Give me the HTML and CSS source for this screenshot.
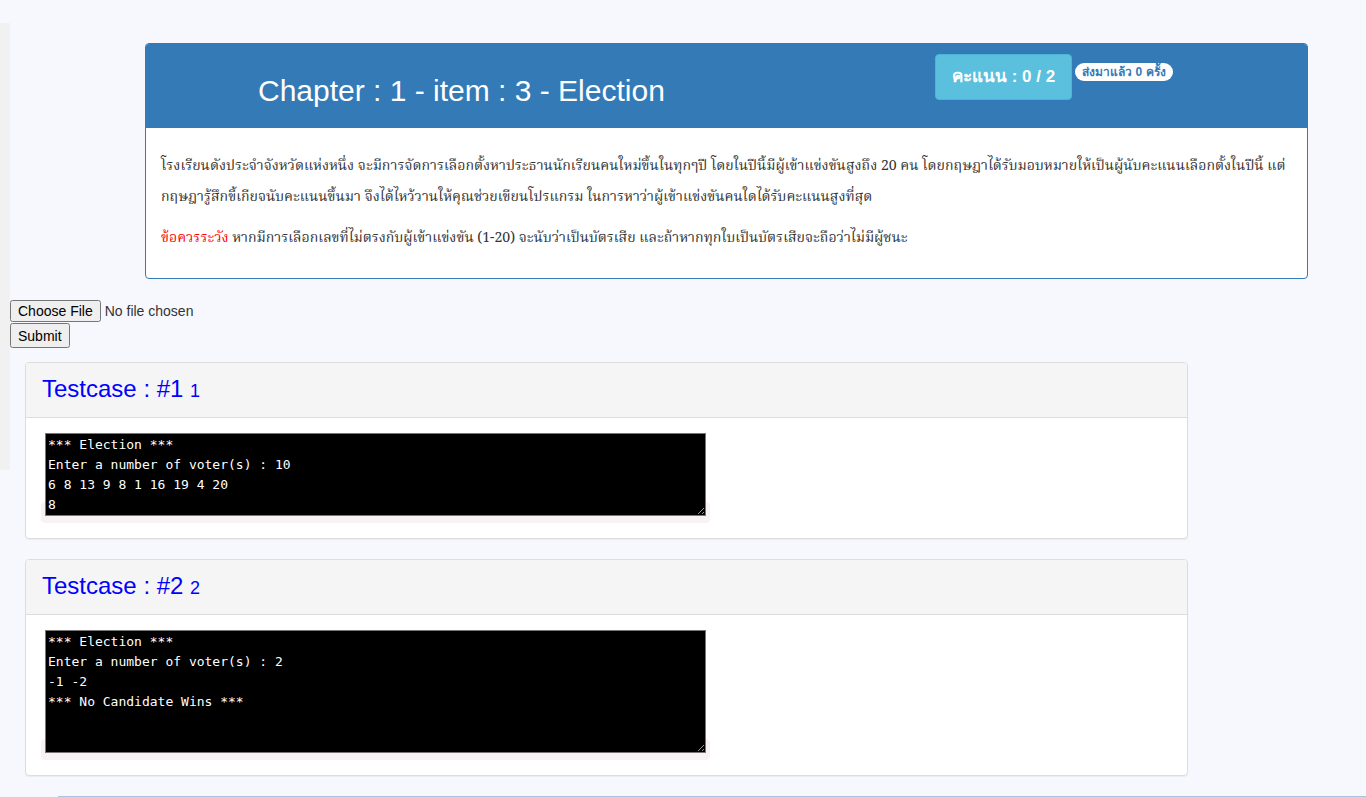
FILE: index.html
```html
<!DOCTYPE html>
<html lang="th">
<head>
<meta charset="utf-8">
<title>Chapter : 1 - item : 3 - Election</title>
<link rel="stylesheet" href="styles.css">
</head>
<body>
<div class="sidebar"></div>
<div class="problem">
  <div class="problem-head">
    <h1 class="problem-title">Chapter : 1 - item : 3 - Election</h1>
    <div class="scores">
      <span class="score">คะแนน : 0 / 2</span>
      <span class="sent">ส่งมาแล้ว 0 ครั้ง</span>
    </div>
  </div>
  <div class="problem-body">
    <p>โรงเรียนดังประจำจังหวัดแห่งหนึ่ง จะมีการจัดการเลือกตั้งหาประธานนักเรียนคนใหม่ขึ้นในทุกๆปี โดยในปีนี้มีผู้เข้าแข่งขันสูงถึง 20 คน โดยกฤษฎาได้รับมอบหมายให้เป็นผู้นับคะแนนเลือกตั้งในปีนี้ แต่<br>กฤษฎารู้สึกขี้เกียจนับคะแนนขึ้นมา จึงได้ไหว้วานให้คุณช่วยเขียนโปรแกรม ในการหาว่าผู้เข้าแข่งขันคนใดได้รับคะแนนสูงที่สุด</p>
    <p><span class="warn">ข้อควรระวัง</span> หากมีการเลือกเลขที่ไม่ตรงกับผู้เข้าแข่งขัน (1-20) จะนับว่าเป็นบัตรเสีย และถ้าหากทุกใบเป็นบัตรเสียจะถือว่าไม่มีผู้ชนะ</p>
  </div>
</div>
<form class="upload">
  <input type="file" class="file">
  <button type="button" class="submit">Submit</button>
</form>
<div class="cases">
  <div class="case">
    <div class="case-head"><h3 class="case-title">Testcase : #1 <small>1</small></h3></div>
    <div class="case-body"><code class="code"><textarea class="out out-4" readonly>*** Election ***
Enter a number of voter(s) : 10
6 8 13 9 8 1 16 19 4 20
8</textarea></code></div>
  </div>
  <div class="case">
    <div class="case-head"><h3 class="case-title">Testcase : #2 <small>2</small></h3></div>
    <div class="case-body"><code class="code"><textarea class="out out-6" readonly>*** Election ***
Enter a number of voter(s) : 2
-1 -2
*** No Candidate Wins ***</textarea></code></div>
  </div>
</div>
<div class="footer-line"></div>
</body>
</html>
```
FILE: styles.css
```css
html, body {
  margin: 0;
  padding: 0;
}
body {
  background: #f7f8fd;
  font-family: "Liberation Sans", Arial, sans-serif;
  font-size: 14px;
  color: #333;
  position: relative;
  overflow: hidden;
  height: 797px;
}
.sidebar {
  position: absolute;
  left: 0;
  top: 23px;
  width: 10px;
  height: 447px;
  background: #f1f1f1;
}
.problem {
  margin: 43px 0 0 145px;
  width: 1163px;
  border: 1px solid #337ab7;
  border-radius: 4px;
  background: #fff;
  box-sizing: border-box;
}
.problem-head {
  background: #337ab7;
  height: 84px;
  box-sizing: border-box;
  padding: 10px 0 0 112px;
  display: flex;
  align-items: flex-start;
  border-radius: 3px 3px 0 0;
}
.problem-title {
  flex: 0 0 677px;
  margin: 20px 0 0 0;
  font-size: 30px;
  font-weight: normal;
  line-height: 33px;
  color: #fff;
}
.scores {
  display: flex;
  align-items: flex-start;
}
.score {
  display: inline-block;
  background: #5bc0de;
  border: 1px solid #4ab5d6;
  border-radius: 4px;
  color: #fff;
  font-weight: bold;
  font-size: 17px;
  line-height: 24px;
  padding: 10px 16px;
}
.sent {
  display: inline-block;
  margin: 9px 0 0 3px;
  background: #fff;
  color: #337ab7;
  border-radius: 10px;
  font-weight: bold;
  font-size: 12px;
  line-height: 18px;
  padding: 0 7px;
}
.problem-body {
  padding: 23px 15px 14px;
  font-family: "Norasi", "Noto Serif Thai", "Liberation Serif", "Times New Roman", serif;
  font-size: 14.1px;
  line-height: 31px;
  color: #333;
  white-space: nowrap;
}
.problem-body p {
  margin: 0 0 10px;
}
.warn {
  color: #ff0000;
}
.upload {
  margin: 21px 0 0 10px;
}
.file {
  display: block;
  font-family: "Liberation Sans", Arial, sans-serif;
  font-size: 14px;
  height: 22px;
  margin: 0;
}
.submit {
  display: block;
  font-family: "Liberation Sans", Arial, sans-serif;
  font-size: 14px;
  margin: 1px 0 0 0;
  height: 25px;
  padding: 0 6px;
}
.cases {
  margin: 14px 0 0 25px;
  width: 1163px;
}
.case {
  background: #fff;
  border: 1px solid #ddd;
  border-radius: 4px;
  margin-bottom: 20px;
  box-shadow: 0 1px 1px rgba(0,0,0,0.05);
}
.case-head {
  background: #f5f5f5;
  border-bottom: 1px solid #ddd;
  border-radius: 3px 3px 0 0;
  height: 55px;
  box-sizing: border-box;
  padding: 0 16px;
  display: flex;
  align-items: center;
}
.case-title {
  margin: 0;
  font-size: 24px;
  font-weight: normal;
  color: #0000ff;
  line-height: 30px;
}
.case-title small {
  font-size: 18px;
}
.case-body {
  padding: 15px 15px 16px;
  line-height: 0;
}
.code {
  display: inline;
  padding: 2px 4px 4px;
  background: #f9f2f4;
  border-radius: 4px;
  font-family: "DejaVu Sans Mono", monospace;
  font-size: 12.6px;
  line-height: 20px;
  color: #c7254e;
}
.out {
  display: inline-block;
  vertical-align: baseline;
  margin: 0;
  width: 661px;
  box-sizing: border-box;
  background: #000;
  color: #fff;
  border: 1px solid #767676;
  font-family: "DejaVu Sans Mono", monospace;
  font-size: 13px;
  line-height: 20px;
  padding: 1px 2px;
  resize: vertical;
  overflow: hidden;
}
.out-4 { height: 83px; }
.out-6 { height: 123px; }
.footer-line {
  margin: 0 0 0 58px;
  border-top: 1px solid #a9c3e0;
}
```
